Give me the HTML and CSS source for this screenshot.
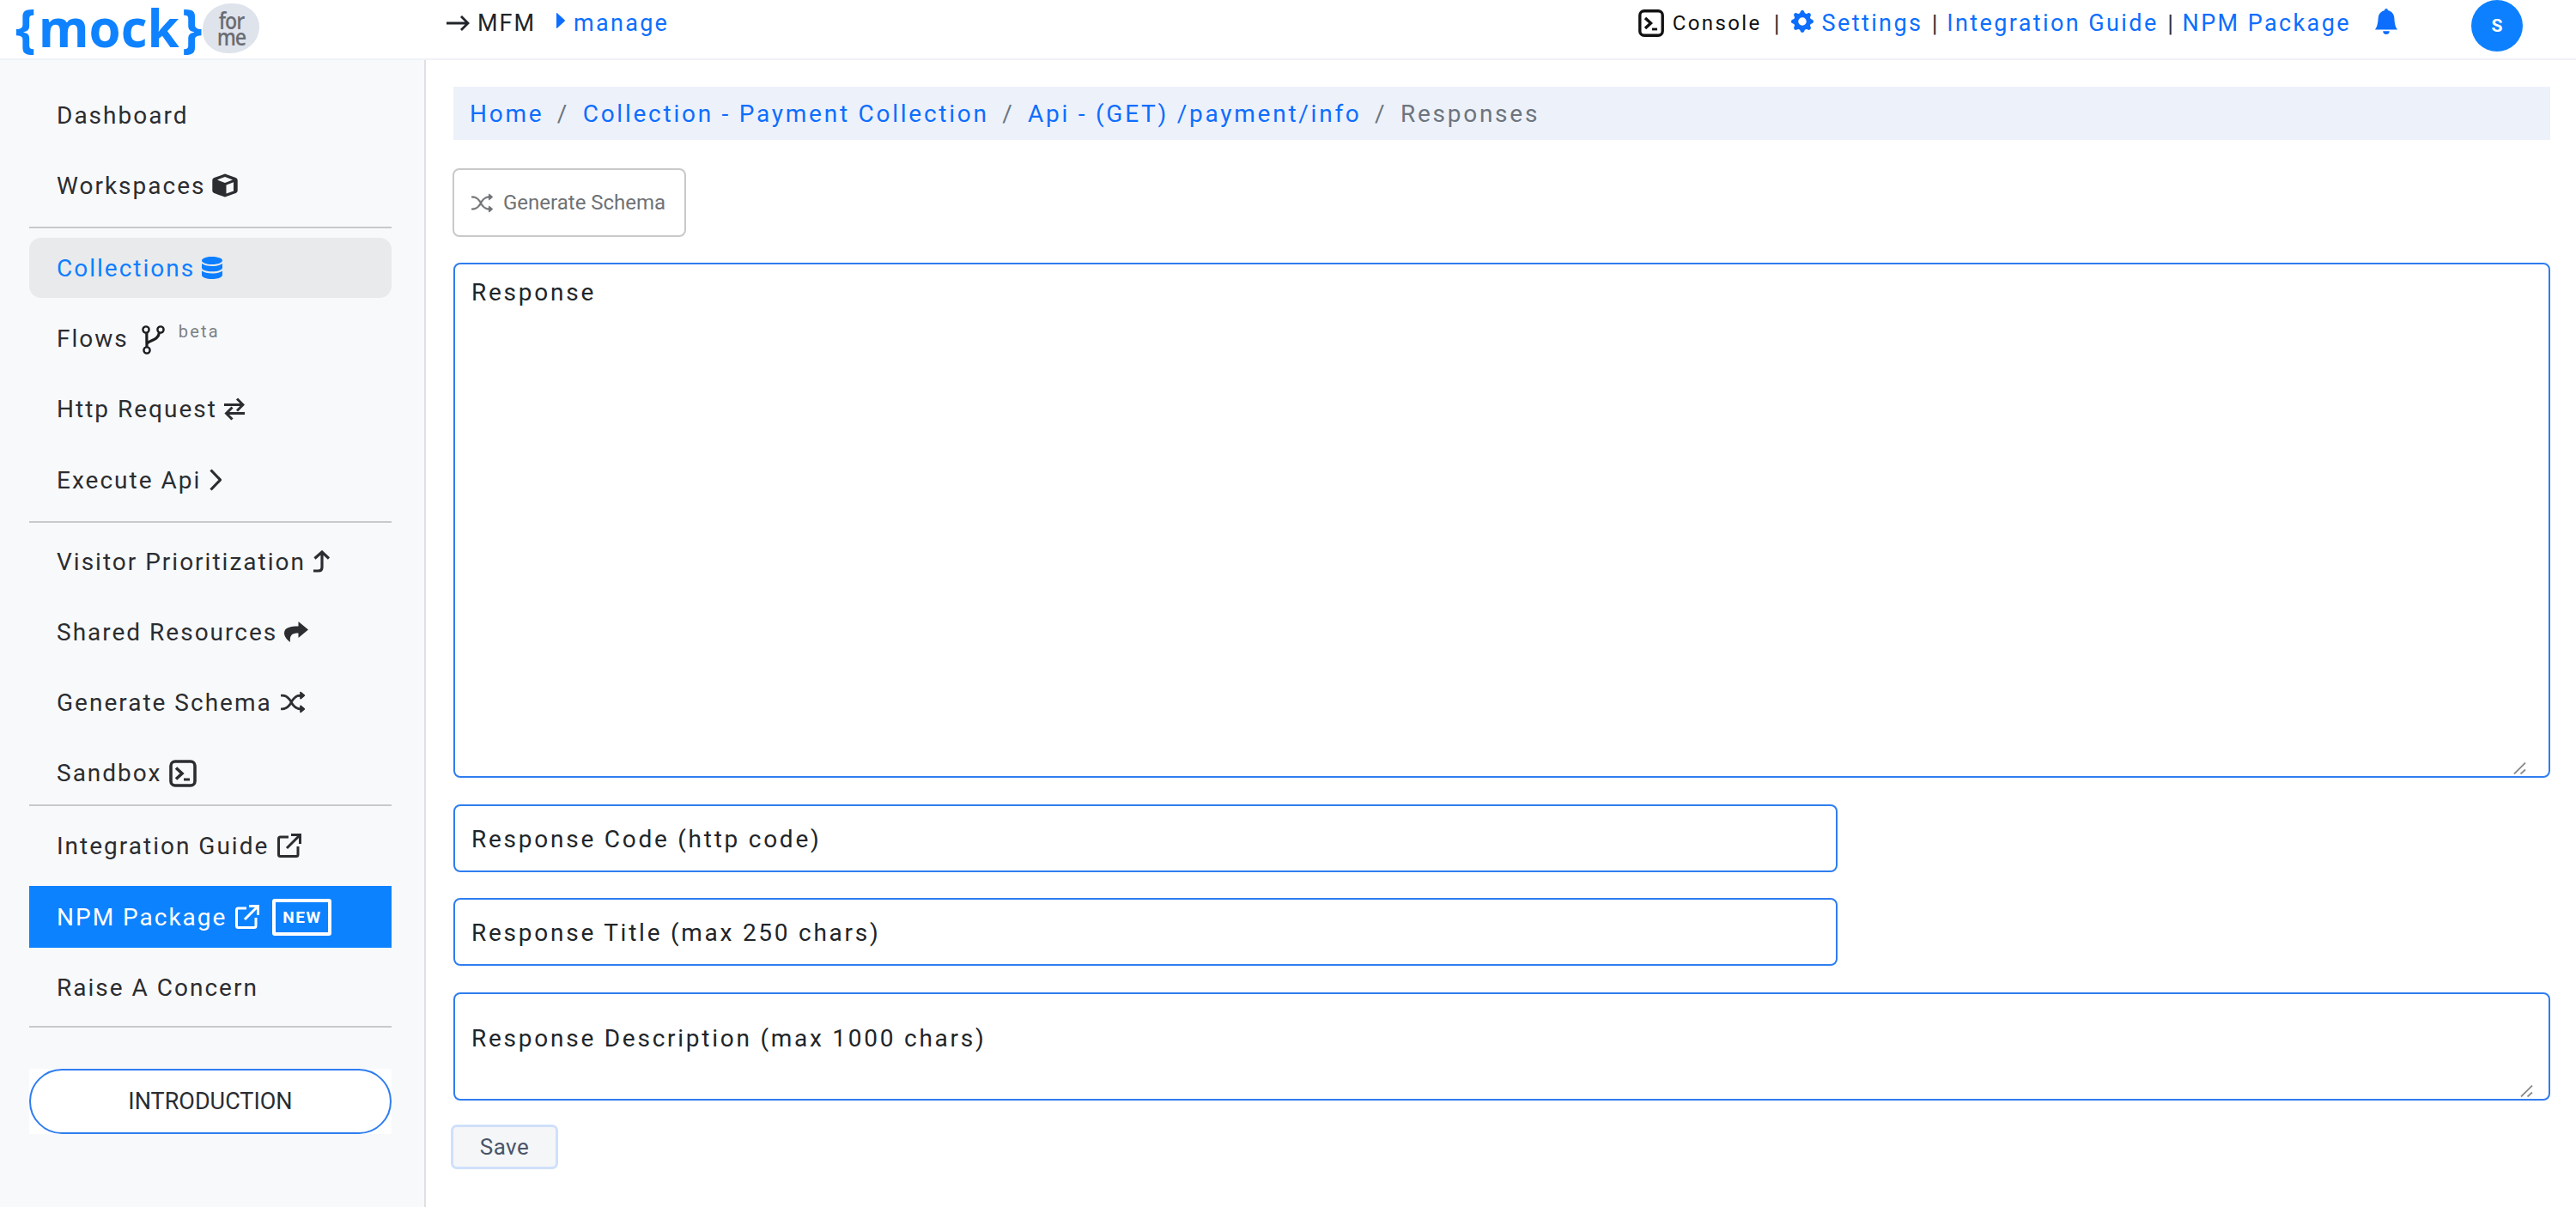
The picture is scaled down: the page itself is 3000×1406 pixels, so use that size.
FILE: index.html
```html
<!DOCTYPE html>
<html lang="en">
<head>
<meta charset="utf-8">
<title>Mock For Me - Responses</title>
<link rel="stylesheet" href="styles.css">
</head>
<body>
<header class="topbar">
  <a class="logo">
    <span class="logo-word">{<span class="logo-mock">mock</span>}</span>
    <span class="logo-blob"><span class="logo-for">for<br>me</span></span>
  </a>
  <div class="org">
    <svg class="ico-arrow" viewBox="0 0 28 20"><path d="M1 10h25M18 2l8 8-8 8" fill="none" stroke="#212529" stroke-width="2.8"/></svg>
    <span class="org-name">MFM</span>
  </div>
  <a class="manage">
    <svg class="ico-caret" viewBox="0 0 10 18"><path d="M0 .5c0-.5.500-.7.900-.3L9.600 8.300c.4.400.4 1 0 1.400L.9 17.800c-.4.400-.9.200-.9-.3z" fill="#0d6efd"/></svg>
    <span>manage</span>
  </a>
  <nav class="top-links">
    <svg class="ico-console" viewBox="0 0 30 32"><rect x="1.8" y="1.8" width="26.4" height="28.4" rx="5" fill="none" stroke="#111" stroke-width="3.4"/><path d="M8 10l6.500 6-6.500 6" fill="none" stroke="#111" stroke-width="3.400"/><path d="M16 23h6" stroke="#111" stroke-width="2.800"/></svg>
    <span class="console-label">Console</span>
    <span class="bar bar-first">|</span>
    <svg class="ico-gear" viewBox="0 0 16 16"><path fill="#0d6efd" d="M9.405 1.05c-.413-1.4-2.397-1.4-2.81 0l-.1.34a1.464 1.464 0 0 1-2.105.872l-.31-.17c-1.283-.698-2.686.705-1.987 1.987l.169.311c.446.82.023 1.841-.872 2.105l-.34.1c-1.4.413-1.4 2.397 0 2.81l.34.1a1.464 1.464 0 0 1 .872 2.105l-.17.31c-.698 1.283.705 2.686 1.987 1.987l.311-.169a1.464 1.464 0 0 1 2.105.872l.1.34c.413 1.4 2.397 1.4 2.81 0l.1-.34a1.464 1.464 0 0 1 2.105-.872l.31.17c1.283.698 2.686-.705 1.987-1.987l-.169-.311a1.464 1.464 0 0 1 .872-2.105l.34-.1c1.4-.413 1.4-2.397 0-2.81l-.34-.1a1.464 1.464 0 0 1-.872-2.105l.17-.31c.698-1.283-.705-2.686-1.987-1.987l-.311.169a1.464 1.464 0 0 1-2.105-.872l-.1-.34zM8 10.93a2.929 2.929 0 1 1 0-5.86 2.929 2.929 0 0 1 0 5.858z"/></svg>
    <a class="top-link">Settings</a>
    <span class="bar">|</span>
    <a class="top-link">Integration Guide</a>
    <span class="bar">|</span>
    <a class="top-link">NPM Package</a>
    <svg class="ico-bell" viewBox="0 0 16 16"><path fill="#0d6efd" d="M8 16a2 2 0 0 0 2-2H6a2 2 0 0 0 2 2zm.995-14.901a1 1 0 1 0-1.99 0A5.002 5.002 0 0 0 3 6c0 1.098-.5 6-2 7h14c-1.5-1-2-5.902-2-7 0-2.42-1.72-4.44-4.005-4.901z"/></svg>
    <span class="avatar">S</span>
  </nav>
</header>

<div class="shell">
  <aside class="sidebar">
    <div class="nav-group">
      <a class="nav-item">Dashboard</a>
      <a class="nav-item"><span>Workspaces</span>
        <svg class="ico ico-cube" viewBox="0 0 30 28"><path fill="#2b2d30" d="M15 .5l12.5 4.6c1.3.5 2.2 1.7 2.2 3v12c0 1.3-.9 2.5-2.2 3L15 27.5 2.500 23.100C1.200 22.600.3 21.400.3 20.100v-12c0-1.300.9-2.500 2.200-3z"/><path fill="#f8f9fb" d="M15 4l9 3.500-9 3.500-9-3.500z"/><path fill="#f8f9fb" d="M16.500 13.500l8.500-3.300v10.300l-8.500 3z"/></svg>
      </a>
    </div>
    <hr class="divider">
    <div class="nav-group">
      <a class="nav-item is-current"><span>Collections</span>
        <svg class="ico ico-db" viewBox="0 0 24 26"><path fill="#0d7eff" d="M12 0c6.600 0 12 2 12 4.500S18.600 9 12 9 0 7 0 4.500 5.400 0 12 0zM0 8c2.400 2 7 3 12 3s9.600-1 12-3v5c0 2.500-5.400 4.300-12 4.300S0 15.500 0 13zM0 16.500c2.400 2 7 3 12 3s9.600-1 12-3v5c0 2.500-5.400 4.500-12 4.500S0 24 0 21.500z"/></svg>
      </a>
      <a class="nav-item"><span>Flows</span>
        <svg class="ico ico-fork" viewBox="0 0 28 34"><g fill="none" stroke="#1c1e21" stroke-width="2.400"><circle cx="6" cy="5" r="3.600"/><circle cx="23" cy="5" r="3.600"/><circle cx="7" cy="29" r="3.600"/></g><path d="M6.800 8.500l.2 17M7 22c1-5 13-3 14.500-13.500" fill="none" stroke="#1c1e21" stroke-width="3.200"/></svg>
        <span class="beta">beta</span>
      </a>
      <a class="nav-item"><span>Http Request</span>
        <svg class="ico ico-swap" viewBox="0 0 24 27"><path d="M0 8.500h21M15 1.500l7 7-7 7M24 18.500H3M9.500 11.500l-7 7 7 7" fill="none" stroke="#2b2d30" stroke-width="3"/></svg>
      </a>
      <a class="nav-item"><span>Execute Api</span>
        <svg class="ico ico-chev" viewBox="0 0 14 26"><path d="M1.500 1.500L12.500 13 1.500 24.500" fill="none" stroke="#2b2d30" stroke-width="3.200"/></svg>
      </a>
    </div>
    <hr class="divider">
    <div class="nav-group nav-group-tight">
      <a class="nav-item"><span>Visitor Prioritization</span>
        <svg class="ico ico-turn" viewBox="0 0 20 26"><path d="M1 24h6c3 0 4-1.500 4-4V3M2.500 9.500L11 2l8 7.500" fill="none" stroke="#2b2d30" stroke-width="3.200"/></svg>
      </a>
      <a class="nav-item"><span>Shared Resources</span>
        <svg class="ico ico-share" viewBox="0 0 28 24"><path fill="#2b2d30" d="M16.500 0L28 9.500 16.500 19v-5.500C9.500 13.500 6 15.500 7 24 2.500 21 0 16.800 0 13.500 0 6.500 8 5.500 16.500 5.500z"/></svg>
      </a>
      <a class="nav-item"><span>Generate Schema</span>
        <svg class="ico ico-shuffle" viewBox="0 0 16 16"><path fill="#2b2d30" stroke="#2b2d30" stroke-width=".6" d="M0 3.500A.5.5 0 0 1 .5 3H1c2.202 0 3.827 1.240 4.874 2.418.49.552.865 1.102 1.126 1.532.26-.43.636-.98 1.126-1.532C9.173 4.240 10.798 3 13 3v1c-1.798 0-3.173 1.010-4.126 2.082A9.624 9.624 0 0 0 7.556 8a9.624 9.624 0 0 0 1.317 1.918C9.828 10.990 11.204 12 13 12v1c-2.202 0-3.827-1.240-4.874-2.418A10.595 10.595 0 0 1 7 9.050c-.26.43-.636.98-1.126 1.532C4.827 11.760 3.202 13 1 13H.5a.5.5 0 0 1 0-1H1c1.798 0 3.173-1.010 4.126-2.082A9.624 9.624 0 0 0 6.444 8a9.624 9.624 0 0 0-1.317-1.918C4.172 5.010 2.796 4 1 4H.5a.5.5 0 0 1-.5-.5zM13 5.466V1.534a.25.25 0 0 1 .41-.192l2.360 1.966c.12.1.12.284 0 .384l-2.360 1.966a.25.25 0 0 1-.41-.192zm0 9v-3.932a.25.25 0 0 1 .41-.192l2.360 1.966c.12.1.12.284 0 .384l-2.360 1.966a.25.25 0 0 1-.41-.192z"/></svg>
      </a>
      <a class="nav-item"><span>Sandbox</span>
        <svg class="ico ico-term" viewBox="0 0 32 32"><rect x="2" y="2" width="28" height="28" rx="5" fill="none" stroke="#2b2d30" stroke-width="3.600"/><path d="M8 9.500l7 6.500-7 6.500" fill="none" stroke="#2b2d30" stroke-width="3.600"/><path d="M17 23h7" stroke="#2b2d30" stroke-width="3"/></svg>
      </a>
    </div>
    <hr class="divider divider-tight">
    <div class="nav-group">
      <a class="nav-item"><span>Integration Guide</span>
        <svg class="ico ico-ext" viewBox="0 0 28 28"><path d="M13 4H3.500C2.100 4 1.500 4.700 1.500 6v18.500c0 1.300.6 2 2 2H22c1.300 0 2-.7 2-2V15M11 17L26 2M16 1.500h10.500V12" fill="none" stroke="#2b2d30" stroke-width="3"/></svg>
      </a>
      <a class="nav-item is-featured"><span>NPM Package</span>
        <svg class="ico ico-ext" viewBox="0 0 28 28"><path d="M13 4H3.500C2.100 4 1.500 4.700 1.500 6v18.500c0 1.300.6 2 2 2H22c1.300 0 2-.7 2-2V15M11 17L26 2M16 1.500h10.500V12" fill="none" stroke="#fff" stroke-width="3"/></svg>
        <span class="new-badge">NEW</span>
      </a>
      <a class="nav-item">Raise A Concern</a>
    </div>
    <hr class="divider divider-last">
    <div class="intro-wrap"><button class="intro-btn">INTRODUCTION</button></div>
  </aside>

  <main class="content">
    <ol class="crumbs">
      <li><a>Home</a></li>
      <li class="sep">/</li>
      <li><a>Collection - Payment Collection</a></li>
      <li class="sep">/</li>
      <li><a>Api - (GET) /payment/info</a></li>
      <li class="sep">/</li>
      <li class="crumb-current">Responses</li>
    </ol>
    <button class="schema-btn">
      <svg class="ico-shuffle-btn" viewBox="0 0 16 16"><path fill="#6f7275" stroke="#6f7275" stroke-width=".4" d="M0 3.500A.5.5 0 0 1 .5 3H1c2.202 0 3.827 1.240 4.874 2.418.49.552.865 1.102 1.126 1.532.26-.43.636-.98 1.126-1.532C9.173 4.240 10.798 3 13 3v1c-1.798 0-3.173 1.010-4.126 2.082A9.624 9.624 0 0 0 7.556 8a9.624 9.624 0 0 0 1.317 1.918C9.828 10.990 11.204 12 13 12v1c-2.202 0-3.827-1.240-4.874-2.418A10.595 10.595 0 0 1 7 9.050c-.26.43-.636.98-1.126 1.532C4.827 11.760 3.202 13 1 13H.5a.5.5 0 0 1 0-1H1c1.798 0 3.173-1.010 4.126-2.082A9.624 9.624 0 0 0 6.444 8a9.624 9.624 0 0 0-1.317-1.918C4.172 5.010 2.796 4 1 4H.5a.5.5 0 0 1-.5-.5zM13 5.466V1.534a.25.25 0 0 1 .41-.192l2.360 1.966c.12.1.12.284 0 .384l-2.360 1.966a.25.25 0 0 1-.41-.192zm0 9v-3.932a.25.25 0 0 1 .41-.192l2.360 1.966c.12.1.12.284 0 .384l-2.360 1.966a.25.25 0 0 1-.41-.192z"/></svg>
      Generate Schema
    </button>
    <div class="area-wrap area-response">
      <textarea class="field field-area" placeholder="Response"></textarea>
      <svg class="grip grip-wide" viewBox="0 0 15 14"><path d="M1 13.500L14 .5M8.500 13.500l5.500-5" stroke="#8a8a8a" stroke-width="1.800" fill="none"/></svg>
    </div>
    <input class="field field-line first-line" placeholder="Response Code (http code)">
    <input class="field field-line" placeholder="Response Title (max 250 chars)">
    <div class="area-wrap area-desc">
      <textarea class="field field-area field-desc" placeholder="Response Description (max 1000 chars)"></textarea>
      <svg class="grip" viewBox="0 0 15 14"><path d="M1 13.500L14 .5M8.500 13.500l5.500-5" stroke="#8a8a8a" stroke-width="1.800" fill="none"/></svg>
    </div>
    <button class="save-btn">Save</button>
  </main>
</div>
</body>
</html>
```
FILE: styles.css
```css
* { box-sizing: border-box; }
html, body { margin: 0; height: 100%; overflow: hidden; background: #fff; }
body { font-family: Roboto, "Liberation Sans", sans-serif; color: #212529; font-size: 28px; }
a { text-decoration: none; }

.topbar { height: 70px; display: flex; align-items: flex-start; padding-left: 18px; border-bottom: 2px solid #f0f2f8; background: #fff; }
.logo { display: flex; align-items: flex-start; width: 484px; flex: none; height: 68px; }
.logo-word { font-family: "Open Sans", sans-serif; font-weight: 700; font-size: 60px; line-height: 64px; color: #0f82ff; letter-spacing: 0; }
.logo-mock { margin: 0 3px; }
.logo-blob { width: 66px; height: 58px; margin: 4px 0 0 1px; background: #dfe3ec; border-radius: 50% 46% 52% 44%; display: flex; align-items: center; justify-content: center; }
.logo-for { font-family: "Open Sans", sans-serif; font-weight: 600; font-size: 27px; line-height: 19px; letter-spacing: -1.2px; color: #6a6d72; text-align: center; transform: scaleX(.86); }
.org { display: flex; align-items: center; height: 54px; width: 146px; flex: none; padding-left: 17px; }
.ico-arrow { width: 28px; height: 20px; margin-right: 9px; }
.org-name { letter-spacing: 2px; font-size: 27px; }
.manage { display: flex; align-items: center; height: 54px; color: #0d6efd; letter-spacing: 2.3px; font-size: 27px; flex: none; }
.ico-caret { width: 10px; height: 18px; margin: -6px 10px 0 0; }
.top-links { margin-left: auto; display: flex; align-items: center; height: 54px; padding-right: 62px; }
.ico-console { width: 30px; height: 32px; }
.console-label { font-size: 24px; letter-spacing: 2.4px; margin-left: 10px; color: #111; }
.bar { margin: 0 10.5px; font-size: 28px; color: #333; }
.bar-first { margin: 0 13px 0 14px; }
.ico-gear { width: 26px; height: 26px; margin-right: 10px; margin-top: -4px; }
.top-link { color: #0d6efd; letter-spacing: 2.4px; font-size: 27px; }
.ico-bell { width: 30px; height: 32px; margin-left: 26px; margin-top: -4px; }
.avatar { width: 60px; height: 60px; border-radius: 50%; background: #0d80ff; color: #fff; margin-left: 84px; margin-top: 6px; display: flex; align-items: center; justify-content: center; font-size: 21px; font-weight: 700; }

.shell { display: flex; height: 1336px; }
.sidebar { width: 496px; flex: none; background: #f8f9fb; border-right: 2px solid #dfe0e3; padding: 29px 38px 0 34px; }
.nav-group { display: flex; flex-direction: column; gap: 12.3px; }
.nav-group-tight { gap: 12px; margin-top: -1px; }
.nav-item { height: 70px; display: flex; align-items: center; padding-left: 32px; letter-spacing: 2px; color: #2b2d30; white-space: nowrap; border-radius: 14px; }
.is-current { background: #e9eaec; color: #0d7eff; }
.is-featured { background: #0d82ff; color: #fff; border-radius: 0; height: 72px; margin-bottom: -1px; }
.ico { margin-left: 10px; flex: none; }
.ico-cube { width: 30px; height: 28px; margin-left: 8px; }
.ico-db { width: 24px; height: 26px; margin-left: 8px; }
.ico-fork { width: 28px; height: 34px; margin-left: 14px; margin-top: 2px; }
.ico-swap { width: 24px; height: 27px; margin-left: 8px; }
.ico-chev { width: 14px; height: 26px; }
.ico-turn { width: 20px; height: 26px; margin-left: 8px; }
.ico-share { width: 28px; height: 24px; margin-left: 8px; }
.ico-shuffle { width: 28px; height: 28px; }
.ico-term { width: 32px; height: 32px; margin-top: 2px; margin-left: 9px; }
.ico-ext { width: 28px; height: 28px; }
.beta { font-size: 20px; color: #7b8084; letter-spacing: 2.2px; margin: -18px 0 0 16px; line-height: 1; }
.new-badge { margin-left: 15px; width: 69px; height: 43px; border: 4px solid #fff; border-radius: 3px; font-size: 19px; font-weight: 700; letter-spacing: 1.5px; display: flex; align-items: center; justify-content: center; }
.divider { border: 0; height: 2px; background: #c8c9cb; margin: 13px 0 11px; }
.divider-tight { margin-top: 2px; }
.divider-last { margin-top: 9px; }
.intro-wrap { background: #fff; margin-top: 48px; }
.intro-btn { width: 100%; height: 76px; border: 2px solid #2f7df0; border-radius: 38px; background: #fff; font: 400 27px Roboto, sans-serif; color: #2b2d30; display: block; }

.content { flex: 1; min-width: 0; padding: 31px 30px 0 32px; display: flex; flex-direction: column; align-items: flex-start; }
.crumbs { list-style: none; margin: 0; padding: 0 19px; height: 62px; width: 100%; background: #edf1fa; display: flex; align-items: center; letter-spacing: 2.75px; }
.crumbs a { color: #0d6efd; }
.sep { color: #6c757d; margin: 0 15.5px; }
.crumb-current { color: #6c757d; }
.schema-btn { margin-top: 33px; margin-left: -1px; width: 272px; height: 80px; border: 2px solid #c9c9c9; border-radius: 8px; background: #fff; color: #6f7275; font: 400 24px Roboto, sans-serif; display: flex; align-items: center; gap: 12px; padding: 0 0 0 20px; }
.ico-shuffle-btn { width: 25px; height: 25px; flex: none; }
.field { display: block; border: 2px solid #2f7df0; border-radius: 8px; background: #fff; font: 400 28px Roboto, sans-serif; letter-spacing: 2.75px; color: #212529; padding: 16px 19px; outline: 0; }
.field::placeholder { color: #212529; opacity: 1; }
.area-wrap { position: relative; width: 100%; }
.area-response { height: 600px; margin-top: 30px; }
.area-desc { height: 126px; margin-top: 31px; }
.field-area { width: 100%; height: 100%; resize: none; }
.field-desc { padding-top: 35px; }
.field-line { width: 1612px; height: 79px; margin-top: 30px; padding-top: 18px; }
.first-line { margin-top: 31px; }
.grip { position: absolute; right: 20px; bottom: 4px; width: 15px; height: 14px; }
.grip-wide { right: 28px; }
.save-btn { margin: 28px 0 0 -3px; width: 125px; height: 52px; border: 3px solid #cfe0fa; border-radius: 7px; background: #f5f6f8; color: #4a5568; font: 400 26px Roboto, sans-serif; letter-spacing: .5px; }
```
